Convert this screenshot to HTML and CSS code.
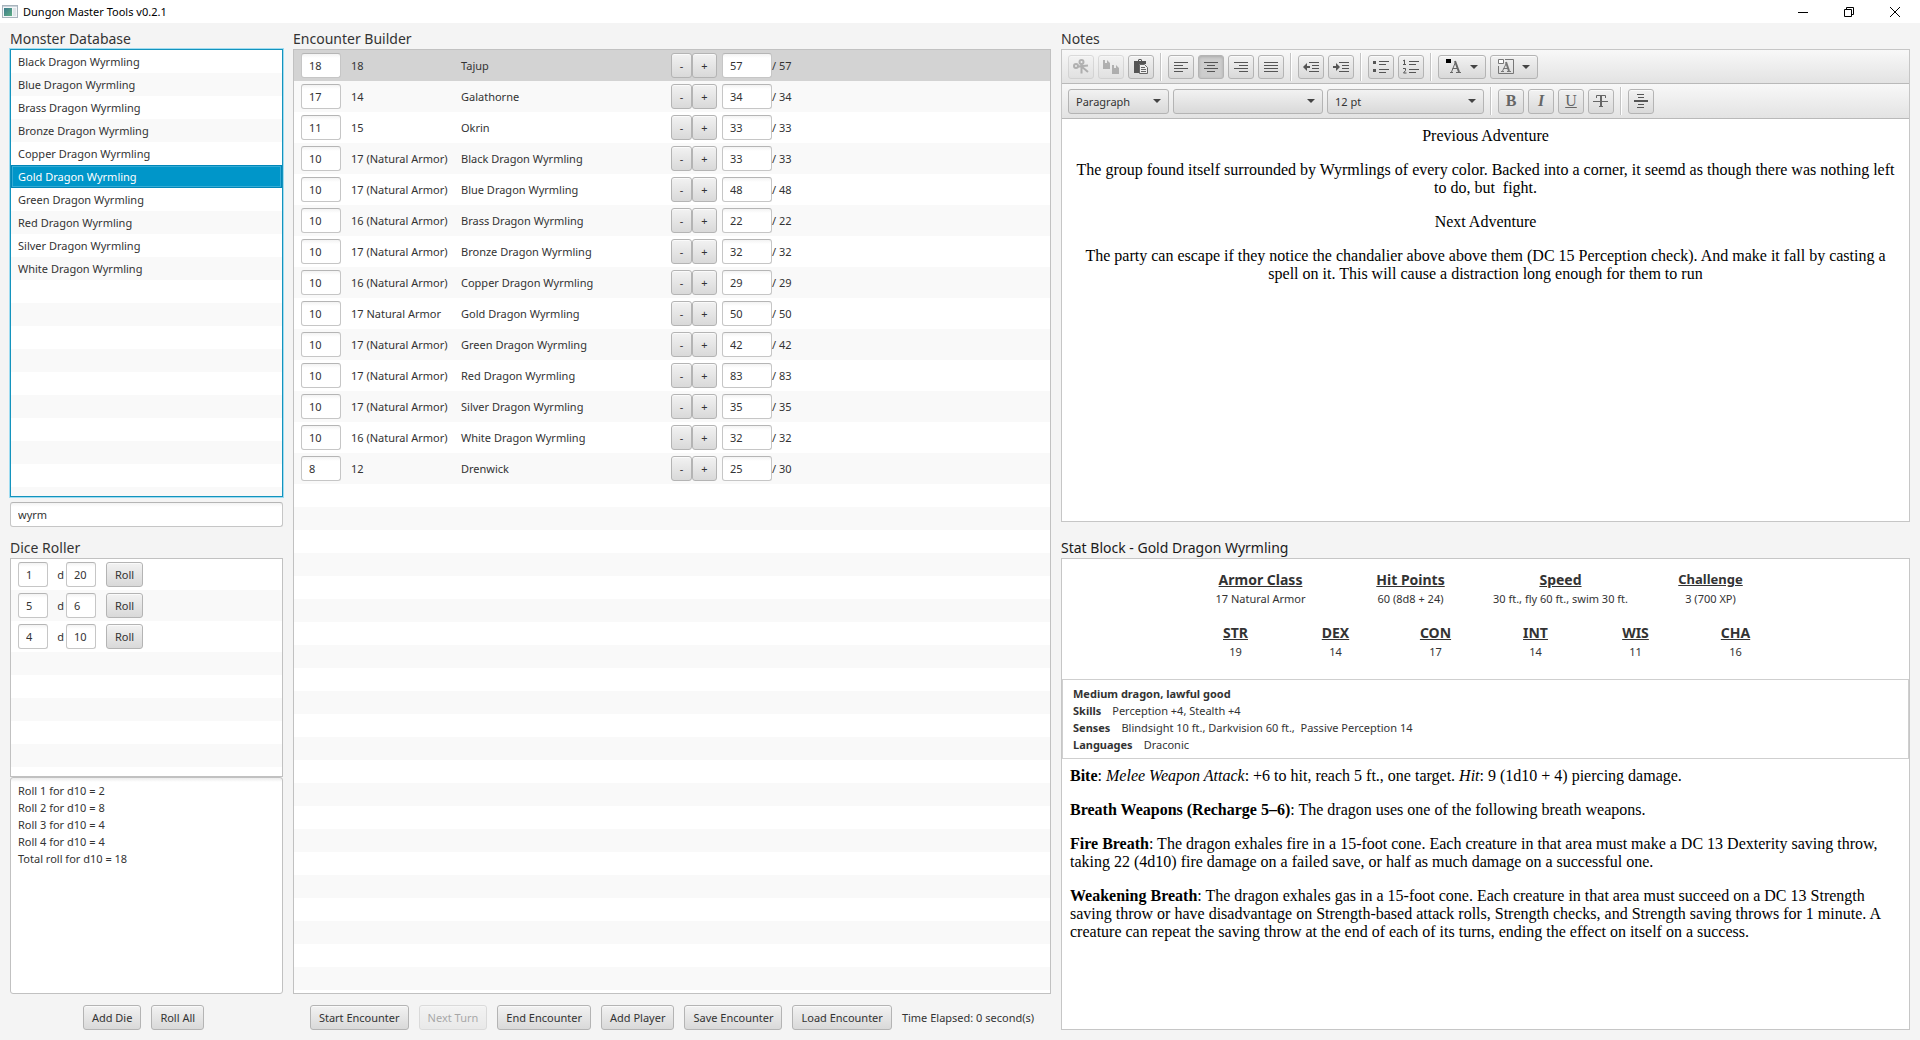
FILE: index.html
```html
<!DOCTYPE html>
<html lang="en">
<head>
<meta charset="utf-8">
<title>Dungon Master Tools v0.2.1</title>
<link rel="stylesheet" href="styles.css">
</head>
<body>
<header class="titlebar">
  <svg class="app-icon" width="16" height="13" viewBox="0 0 16 13" aria-hidden="true">
    <defs><linearGradient id="g" x1="0" y1="0" x2="1" y2="1"><stop offset="0" stop-color="#3c7a8c"/><stop offset="1" stop-color="#5fae84"/></linearGradient></defs>
    <rect x=".5" y=".5" width="15" height="12" fill="#f4f6f8" stroke="#a9b4bd"/>
    <path d="M1 1.5h14" stroke="#c9d3da"/>
    <rect x="2" y="3" width="8" height="8" fill="url(#g)"/>
    <rect x="11" y="3" width="3" height="8" fill="#dfe5e9"/>
  </svg>
  <span class="app-name">Dungon Master Tools v0.2.1</span>
  <button class="win-btn" aria-label="Minimize"><svg width="10" height="10" viewBox="0 0 10 10"><path d="M0 5.5h10" stroke="#000"/></svg></button>
  <button class="win-btn" aria-label="Restore"><svg width="10" height="10" viewBox="0 0 10 10"><path d="M.5 2.5h7v7h-7zM2.5 2.5v-2h7v7h-2" fill="none" stroke="#000"/></svg></button>
  <button class="win-btn" aria-label="Close"><svg width="10" height="10" viewBox="0 0 10 10"><path d="M0 0l10 10M10 0L0 10" stroke="#000"/></svg></button>
</header>

<main class="workspace">
  <div class="column">
    <section class="pane monsters">
      <h2>Monster Database</h2>
      <div class="list focused">
        <ul class="names">
          <li>Black Dragon Wyrmling</li>
          <li>Blue Dragon Wyrmling</li>
          <li>Brass Dragon Wyrmling</li>
          <li>Bronze Dragon Wyrmling</li>
          <li>Copper Dragon Wyrmling</li>
          <li class="selected">Gold Dragon Wyrmling</li>
          <li>Green Dragon Wyrmling</li>
          <li>Red Dragon Wyrmling</li>
          <li>Silver Dragon Wyrmling</li>
          <li>White Dragon Wyrmling</li>
        </ul>
        <div class="filler"></div>
      </div>
      <input class="field search" type="text" value="wyrm" aria-label="Search monsters">
    </section>
    <section class="pane dice">
      <h2>Dice Roller</h2>
      <div class="list">
        <ul class="rows">
          <li class="die"><input class="field" value="1" aria-label="Number of dice"><span>d</span><input class="field" value="20" aria-label="Sides"><button class="btn">Roll</button></li>
          <li class="die"><input class="field" value="5" aria-label="Number of dice"><span>d</span><input class="field" value="6" aria-label="Sides"><button class="btn">Roll</button></li>
          <li class="die"><input class="field" value="4" aria-label="Number of dice"><span>d</span><input class="field" value="10" aria-label="Sides"><button class="btn">Roll</button></li>
        </ul>
        <div class="filler odd"></div>
      </div>
      <textarea class="log" readonly aria-label="Roll results">Roll 1 for d10 = 2
Roll 2 for d10 = 8
Roll 3 for d10 = 4
Roll 4 for d10 = 4
Total roll for d10 = 18</textarea>
    </section>
    <div class="actions dice-actions">
      <button class="btn">Add Die</button>
      <button class="btn">Roll All</button>
    </div>
  </div>

  <div class="column">
    <section class="pane encounter">
      <h2>Encounter Builder</h2>
      <div class="list">
        <ul class="rows">
          <li class="fighter active"><input class="field" value="18" aria-label="Initiative"><span>18</span><span>Tajup</span><button class="btn step">-</button><button class="btn step">+</button><input class="field hp" value="57" aria-label="Hit points"><span>/ 57</span></li>
          <li class="fighter"><input class="field" value="17" aria-label="Initiative"><span>14</span><span>Galathorne</span><button class="btn step">-</button><button class="btn step">+</button><input class="field hp" value="34" aria-label="Hit points"><span>/ 34</span></li>
          <li class="fighter"><input class="field" value="11" aria-label="Initiative"><span>15</span><span>Okrin</span><button class="btn step">-</button><button class="btn step">+</button><input class="field hp" value="33" aria-label="Hit points"><span>/ 33</span></li>
          <li class="fighter"><input class="field" value="10" aria-label="Initiative"><span>17 (Natural Armor)</span><span>Black Dragon Wyrmling</span><button class="btn step">-</button><button class="btn step">+</button><input class="field hp" value="33" aria-label="Hit points"><span>/ 33</span></li>
          <li class="fighter"><input class="field" value="10" aria-label="Initiative"><span>17 (Natural Armor)</span><span>Blue Dragon Wyrmling</span><button class="btn step">-</button><button class="btn step">+</button><input class="field hp" value="48" aria-label="Hit points"><span>/ 48</span></li>
          <li class="fighter"><input class="field" value="10" aria-label="Initiative"><span>16 (Natural Armor)</span><span>Brass Dragon Wyrmling</span><button class="btn step">-</button><button class="btn step">+</button><input class="field hp" value="22" aria-label="Hit points"><span>/ 22</span></li>
          <li class="fighter"><input class="field" value="10" aria-label="Initiative"><span>17 (Natural Armor)</span><span>Bronze Dragon Wyrmling</span><button class="btn step">-</button><button class="btn step">+</button><input class="field hp" value="32" aria-label="Hit points"><span>/ 32</span></li>
          <li class="fighter"><input class="field" value="10" aria-label="Initiative"><span>16 (Natural Armor)</span><span>Copper Dragon Wyrmling</span><button class="btn step">-</button><button class="btn step">+</button><input class="field hp" value="29" aria-label="Hit points"><span>/ 29</span></li>
          <li class="fighter"><input class="field" value="10" aria-label="Initiative"><span>17 Natural Armor</span><span>Gold Dragon Wyrmling</span><button class="btn step">-</button><button class="btn step">+</button><input class="field hp" value="50" aria-label="Hit points"><span>/ 50</span></li>
          <li class="fighter"><input class="field" value="10" aria-label="Initiative"><span>17 (Natural Armor)</span><span>Green Dragon Wyrmling</span><button class="btn step">-</button><button class="btn step">+</button><input class="field hp" value="42" aria-label="Hit points"><span>/ 42</span></li>
          <li class="fighter"><input class="field" value="10" aria-label="Initiative"><span>17 (Natural Armor)</span><span>Red Dragon Wyrmling</span><button class="btn step">-</button><button class="btn step">+</button><input class="field hp" value="83" aria-label="Hit points"><span>/ 83</span></li>
          <li class="fighter"><input class="field" value="10" aria-label="Initiative"><span>17 (Natural Armor)</span><span>Silver Dragon Wyrmling</span><button class="btn step">-</button><button class="btn step">+</button><input class="field hp" value="35" aria-label="Hit points"><span>/ 35</span></li>
          <li class="fighter"><input class="field" value="10" aria-label="Initiative"><span>16 (Natural Armor)</span><span>White Dragon Wyrmling</span><button class="btn step">-</button><button class="btn step">+</button><input class="field hp" value="32" aria-label="Hit points"><span>/ 32</span></li>
          <li class="fighter"><input class="field" value="8" aria-label="Initiative"><span>12</span><span>Drenwick</span><button class="btn step">-</button><button class="btn step">+</button><input class="field hp" value="25" aria-label="Hit points"><span>/ 30</span></li>
        </ul>
        <div class="filler"></div>
      </div>
    </section>
    <div class="actions">
      <button class="btn">Start Encounter</button>
      <button class="btn" disabled>Next Turn</button>
      <button class="btn">End Encounter</button>
      <button class="btn">Add Player</button>
      <button class="btn">Save Encounter</button>
      <button class="btn">Load Encounter</button>
      <span>Time Elapsed: 0 second(s)</span>
    </div>
  </div>

  <div class="column">
    <section class="pane notes">
      <h2>Notes</h2>
      <div class="editor">
        <div class="toolbar">
          <button class="btn tool" disabled aria-label="Cut"><svg width="16" height="16" viewBox="0 0 16 16" fill="none" stroke="#555" stroke-width="2"><circle cx="3" cy="7" r="2"/><circle cx="8.5" cy="3" r="2"/><path d="M5 7.5l10-1M8.5 5v9.5M8 7l7 6"/></svg></button>
          <button class="btn tool" disabled aria-label="Copy"><svg width="16" height="16" viewBox="0 0 16 16" fill="#555"><path d="M0 1h2v3h2V1l3 3v6H0zM9 6h2v3h2V6l3 3v6H9z"/></svg></button>
          <button class="btn tool" aria-label="Paste"><svg width="16" height="16" viewBox="0 0 16 16"><path d="M1 2h4V1l1-1h2l1 1v1h4v3H7L6 6v8H1z" fill="#555"/><path d="M6 1.5h2" stroke="#eee"/><path d="M6.500 5.500h5l3 3v6h-8z" fill="#eee" stroke="#666"/><path d="M8 8.500h4M8 10.500h5M8 12.500h5" stroke="#666"/></svg></button>
          <i class="sep"></i>
          <button class="btn tool" aria-label="Align left"><svg width="16" height="16" viewBox="0 0 16 16" stroke="#555"><path d="M1 3.5h14M1 6.5h9M1 9.5h14M1 12.5h9"/></svg></button>
          <button class="btn tool pressed" aria-label="Align center" aria-pressed="true"><svg width="16" height="16" viewBox="0 0 16 16" stroke="#555"><path d="M1 3.5h14M4 6.5h8M1 9.5h14M4 12.5h8"/></svg></button>
          <button class="btn tool" aria-label="Align right"><svg width="16" height="16" viewBox="0 0 16 16" stroke="#555"><path d="M1 3.5h14M6 6.5h9M1 9.5h14M6 12.5h9"/></svg></button>
          <button class="btn tool" aria-label="Justify"><svg width="16" height="16" viewBox="0 0 16 16" stroke="#555"><path d="M1 3.5h14M1 6.5h14M1 9.5h14M1 12.5h14"/></svg></button>
          <i class="sep"></i>
          <button class="btn tool" aria-label="Outdent"><svg width="16" height="16" viewBox="0 0 16 16" stroke="#555"><path d="M6 3.5h10M9 6.5h7M9 9.5h7M6 12.5h10"/><path d="M0 8l4-4v3h3v2H4v3z" fill="#555" stroke="none"/></svg></button>
          <button class="btn tool" aria-label="Indent"><svg width="16" height="16" viewBox="0 0 16 16" stroke="#555"><path d="M6 3.5h10M9 6.5h7M9 9.5h7M6 12.5h10"/><path d="M7 8L3 4v3H0v2h3v3z" fill="#555" stroke="none"/></svg></button>
          <i class="sep"></i>
          <button class="btn tool" aria-label="Bulleted list"><svg width="16" height="16" viewBox="0 0 16 16" stroke="#555"><path d="M6 2.5h10M6 5.5h7M6 10.5h10M6 13.5h7"/><path d="M0 2h3v3H0zM0 10h3v3H0z" fill="#555" stroke="none"/></svg></button>
          <button class="btn tool" aria-label="Numbered list"><svg width="16" height="16" viewBox="0 0 16 16" fill="none" stroke="#555"><path d="M6 2.5h10M6 5.5h7M6 10.5h10M6 13.5h7"/><path d="M0 2l1.5-1v5M0 5.5h3M0 9.5h2.500v2L.5 14H3.500"/></svg></button>
          <i class="sep"></i>
          <button class="btn picker" aria-label="Text color"><svg width="16" height="16" viewBox="0 0 16 16" fill="none" stroke="#666"><path d="M4 13.5h3M10 13.5h5M5.5 13L9.500 3M6.500 9.5h5"/><path d="M9 2l4 11" stroke-width="2"/><path d="M0 0h5v4H0z" fill="#000" stroke="none"/></svg><i class="caret"></i></button>
          <button class="btn picker" aria-label="Background color"><svg width="16" height="16" viewBox="0 0 16 16" fill="none" stroke="#777"><path d="M7 .5h8.500v14H.5V7"/><path d="M.5 .5h5v4h-5z" fill="#fff"/><path d="M3 12.500h3M9 12.500h4M4.500 12L8.500 4M5.500 9.500h5"/><path d="M8 3l3 9" stroke-width="2"/></svg><i class="caret"></i></button>
        </div>
        <div class="toolbar">
          <span class="drop style"><select aria-label="Paragraph style"><option>Paragraph</option></select></span>
          <span class="drop family"><select aria-label="Font family"><option></option></select></span>
          <span class="drop size"><select aria-label="Font size"><option>12 pt</option></select></span>
          <i class="sep"></i>
          <button class="btn tool glyph" aria-label="Bold"><b>B</b></button>
          <button class="btn tool glyph" aria-label="Italic"><em>I</em></button>
          <button class="btn tool glyph" aria-label="Underline"><u>U</u></button>
          <button class="btn tool glyph" aria-label="Strikethrough"><svg width="16" height="16" viewBox="0 0 16 16" fill="none" stroke="#666"><path d="M3.5 5V2.5h9V5M6 13.5h4M0 8.5h15"/><path d="M8 3v10" stroke-width="2"/></svg></button>
          <i class="sep"></i>
          <button class="btn tool glyph" aria-label="Horizontal rule"><svg width="16" height="16" viewBox="0 0 16 16" stroke="#555"><path d="M4 1.5h7M5 4.5h6M5 11.5h6M4 14.5h7"/><path d="M1 8h14" stroke-width="2"/></svg></button>
        </div>
        <div class="document centered">
          <p>Previous Adventure</p>
          <p>The group found itself surrounded by Wyrmlings of every color. Backed into a corner, it seemd as though there was nothing left to do, but&nbsp; fight.</p>
          <p>Next Adventure</p>
          <p>The party can escape if they notice the chandalier above above them (DC 15 Perception check). And make it fall by casting a spell on it. This will cause a distraction long enough for them to run</p>
        </div>
      </div>
    </section>
    <section class="pane stats">
      <h2>Stat Block - Gold Dragon Wyrmling</h2>
      <div class="block">
        <div class="summary">
          <dl class="vitals">
            <div><dt>Armor Class</dt><dd>17 Natural Armor</dd></div>
            <div><dt>Hit Points</dt><dd>60 (8d8 + 24)</dd></div>
            <div><dt>Speed</dt><dd>30 ft., fly 60 ft., swim 30 ft.</dd></div>
            <div><dt class="small">Challenge</dt><dd>3 (700 XP)</dd></div>
          </dl>
          <dl class="abilities">
            <div><dt>STR</dt><dd>19</dd></div>
            <div><dt>DEX</dt><dd>14</dd></div>
            <div><dt>CON</dt><dd>17</dd></div>
            <div><dt>INT</dt><dd>14</dd></div>
            <div><dt>WIS</dt><dd>11</dd></div>
            <div><dt>CHA</dt><dd>16</dd></div>
          </dl>
        </div>
        <div class="traits">
          <p><b>Medium dragon, lawful good</b></p>
          <p><b>Skills</b>Perception +4, Stealth +4</p>
          <p><b>Senses</b>Blindsight 10 ft., Darkvision 60 ft.,&nbsp; Passive Perception 14</p>
          <p><b>Languages</b>Draconic</p>
        </div>
        <div class="document">
          <p><b>Bite</b>: <em>Melee Weapon Attack</em>: +6 to hit, reach 5 ft., one target. <em>Hit</em>: 9 (1d10 + 4) piercing damage.</p>
          <p><b>Breath Weapons (Recharge 5–6)</b>: The dragon uses one of the following breath weapons.</p>
          <p><b>Fire Breath</b>: The dragon exhales fire in a 15-foot cone. Each creature in that area must make a DC 13 Dexterity saving throw, taking 22 (4d10) fire damage on a failed save, or half as much damage on a successful one.</p>
          <p><b>Weakening Breath</b>: The dragon exhales gas in a 15-foot cone. Each creature in that area must succeed on a DC 13 Strength saving throw or have disadvantage on Strength-based attack rolls, Strength checks, and Strength saving throws for 1 minute. A creature can repeat the saving throw at the end of each of its turns, ending the effect on itself on a success.</p>
        </div>
      </div>
    </section>
  </div>
</main>
</body>
</html>
```

FILE: styles.css
```css
* { box-sizing: border-box; }

body {
  margin: 0;
  min-height: 100vh;
  display: flex;
  flex-direction: column;
  background: #f4f4f4;
  color: #333;
  font: 11px/17px "Noto Sans", "Open Sans", sans-serif;
}

h2, p, ul, dl, dd { margin: 0; padding: 0; }
ul { list-style: none; }
input, button, select, textarea { font: inherit; color: inherit; margin: 0; }

/* Window title bar */
.titlebar {
  display: flex;
  align-items: center;
  height: 23px;
  padding-left: 2px;
  background: #fff;
  color: #000;
}
.app-icon { margin-right: 5px; }
.app-name { margin-right: auto; }
.win-btn {
  display: flex;
  align-items: center;
  justify-content: center;
  width: 46px;
  height: 21px;
  padding: 0;
  border: 0;
  background: none;
}
.win-btn:last-child { margin-right: 2px; }

/* Three-column workspace */
.workspace {
  flex: 1;
  display: grid;
  grid-template-columns: 273fr 758fr 849fr;
  gap: 10px;
  padding: 0 10px 10px;
}
.column, .pane { display: flex; flex-direction: column; min-width: 0; }
h2 {
  height: 26px;
  padding-top: 5px;
  font-size: 14px;
  line-height: 22px;
  font-weight: 400;
}
.encounter { flex: 1; }
.monsters { flex: 504 0 0; }
.dice { flex: 467 0 0; }
.notes { flex: 499 0 0; }
.stats { flex: 508 0 0; }
.dice h2 { height: 31px; padding-top: 10px; }
.stats h2 { height: 36px; padding-top: 15px; color: #1a1a1a; }

/* Lists */
.list {
  flex: 1 0 0;
  display: flex;
  flex-direction: column;
  border: 1px solid #c1c1c1;
  background: #fff;
}
.list.focused {
  border-color: #1493bd;
  box-shadow: 0 0 0 1px #9fdcf1;
}
.list li:nth-child(even) { background: #f9f9f9; }
.names li { height: 23px; padding: 0 7px; line-height: 23px; }
.list .names .selected {
  background: #0096c9;
  box-shadow: inset 0 0 0 1px #0086b8, inset 0 0 0 2px #35abd5;
  color: #fff;
}
.filler {
  flex: 1;
  background: repeating-linear-gradient(#fff 0 23px, #f9f9f9 23px 46px);
}
.filler.odd { background: repeating-linear-gradient(#f9f9f9 0 23px, #fff 23px 46px); }

/* Controls */
.field {
  width: 100%;
  height: 25px;
  padding: 0 7px;
  border: 1px solid #c6c6c6;
  border-top-color: #b5b5b5;
  border-radius: 3px;
  background: linear-gradient(#f3f3f3, #fff 4px);
}
.search { margin-top: 5px; }
.btn {
  height: 25px;
  padding: 0 8px;
  border: 1px solid #b4b4b4;
  border-radius: 3px;
  background: linear-gradient(#f2f2f2, #d9d9d9);
  box-shadow: inset 0 1px 0 #fafafa;
  white-space: nowrap;
}
.btn:disabled { opacity: .4; }
.actions {
  display: flex;
  align-items: center;
  justify-content: center;
  gap: 10px;
  padding-top: 11px;
}
.dice-actions { padding-right: 6px; }

/* Dice rows */
.die {
  display: grid;
  grid-template-columns: 30px 18px 30px 47px;
  align-items: center;
  height: 31px;
  padding: 0 7px;
}
.die span { padding-right: 2px; text-align: right; }
.die .btn { margin-left: 10px; padding: 0; }
.dice .list { flex: 217 0 0; }
.log {
  flex: 207 0 0;
  width: 100%;
  padding: 4px 7px;
  border: 1px solid #c1c1c1;
  border-radius: 3px;
  background: linear-gradient(#ececec, #fff 4px);
  resize: none;
  outline: 0;
}

/* Encounter rows */
.fighter {
  display: grid;
  grid-template-columns: 40px 120px 210px 21px 25px 55px auto;
  align-items: center;
  height: 31px;
  padding-left: 7px;
}
.fighter > :nth-child(2) { padding-left: 10px; white-space: nowrap; }
.fighter .hp { width: 50px; justify-self: end; }
.step { padding: 0; }
.list .rows .active { background: #d3d3d3; }

/* Notes editor */
.editor, .block {
  flex: 1;
  display: flex;
  flex-direction: column;
  border: 1px solid #c6c6c6;
  background: #fff;
}
.toolbar {
  display: flex;
  align-items: center;
  gap: 4px;
  height: 34px;
  padding: 0 6px;
  border-bottom: 1px solid #b9b9b9;
  background: linear-gradient(#f8f8f8, #e3e3e3);
}
.toolbar + .toolbar { height: 35px; }
.sep {
  width: 6px;
  height: 28px;
  background: linear-gradient(90deg, transparent 2px, #c4c4c4 2px 3px, #fff 3px 4px, transparent 4px);
}
.tool, .picker {
  display: flex;
  align-items: center;
  justify-content: center;
  width: 26px;
  height: 24px;
  padding: 0;
}
.pressed { background: #cdcdcd; box-shadow: inset 0 1px 3px #aaa; }
.picker { width: 48px; gap: 8px; }
.glyph { height: 25px; color: #666; font: 700 16px/18px "Liberation Serif", serif; }
.glyph u { font-weight: 400; }
.caret, .drop::after {
  content: "";
  width: 0;
  border: 4px solid transparent;
  border-top-color: #444;
  border-bottom: 0;
}
.drop { display: grid; align-items: center; }
.drop select, .drop::after { grid-area: 1 / 1; }
.drop::after { justify-self: end; margin-right: 8px; pointer-events: none; }
.drop select {
  appearance: none;
  width: 100%;
  height: 25px;
  padding: 0 7px;
  border: 1px solid #b4b4b4;
  border-radius: 3px;
  background: linear-gradient(#f2f2f2, #d9d9d9);
}
.style { width: 101px; }
.family { width: 150px; }
.size { width: 157px; }

.document {
  padding: 8px;
  color: #000;
  font: 16px/18px "Liberation Serif", "Times New Roman", serif;
}
.document p + p { margin-top: 16px; }
.centered { text-align: center; }

/* Stat block */
.summary { padding: 10px 0 19px; text-align: center; }
.vitals, .abilities {
  display: grid;
  grid-template-columns: repeat(4, 150px);
  justify-content: center;
}
.abilities { grid-template-columns: repeat(6, 100px); margin-top: 15px; }
dt {
  font-size: 14px;
  line-height: 21px;
  font-weight: 700;
  text-decoration: underline;
}
dt.small { font-size: 13px; }
.traits {
  padding: 5px 10px;
  border: 1px solid #cfcfcf;
}
.traits b { margin-right: 11px; }
```
